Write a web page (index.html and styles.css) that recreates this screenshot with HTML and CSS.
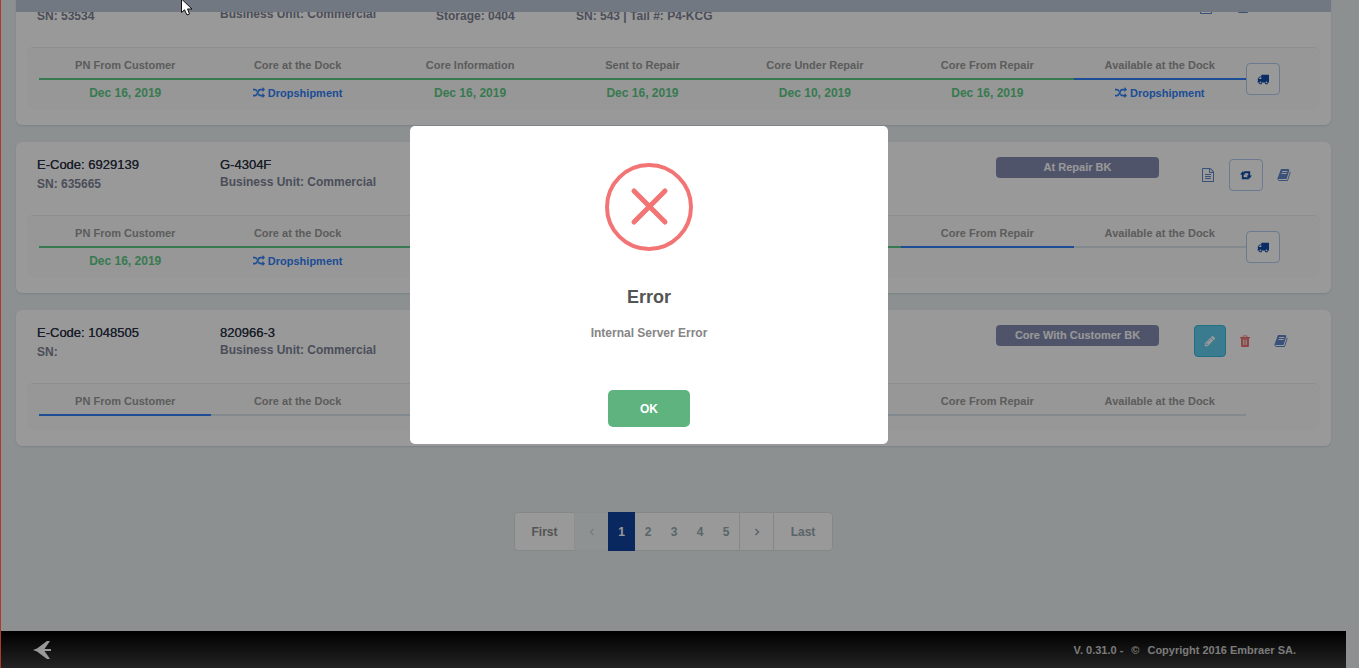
FILE: index.html
```html
<!DOCTYPE html>
<html lang="en">
<head>
<meta charset="utf-8">
<title>Core tracking</title>
<link rel="stylesheet" href="styles.css">
</head>
<body>
<svg class="sprite" aria-hidden="true">
  <symbol id="truck" viewBox="0 0 1792 1792"><path d="M640 1408q0-52-38-90t-90-38-90 38-38 90 38 90 90 38 90-38 38-90zm-384-512h384v-256h-158q-13 0-22 9l-195 195q-9 9-9 22v30zm1280 512q0-52-38-90t-90-38-90 38-38 90 38 90 90 38 90-38 38-90zm256-1088v1024q0 15-4 26.500t-13.500 18.500-16.500 11.500-23.500 6-22.500 2-25.500 0-22.500-.5q0 106-75 181t-181 75-181-75-75-181h-384q0 106-75 181t-181 75-181-75-75-181h-64q-3 0-22.500.5t-25.500 0-22.500-2-23.500-6-16.500-11.500-13.500-18.500-4-26.500q0-26 19-45t45-19v-320q0-8-.5-35t0-38 2.500-34.500 6.500-37 14-30.500 22.500-30l198-198q19-19 50.500-32t58.500-13h160v-192q0-26 19-45t45-19h1024q26 0 45 19t19 45z"/></symbol>
  <symbol id="shuffle" viewBox="0 0 1792 1792"><path d="M666 481q-60 92-137 273-22-45-37-72.500t-40.500-63.500-51-56.500-63-35-81.500-14.500h-224q-14 0-23-9t-9-23v-192q0-14 9-23t23-9h224q250 0 410 225zm1126 799q0 14-9 23l-320 320q-9 9-23 9-13 0-22.500-9.500t-9.500-22.500v-192q-32 0-85 .5t-81 1-73-1-71-5-64-10.500-63-18.500-58-28.500-59-40-55-53.500-56-69.500q59-93 136-273 22 45 37 72.500t40.500 63.500 51 56.500 63 35 81.500 14.500h256v-192q0-14 9-23t23-9q12 0 24 10l319 319q9 9 9 23zm0-896q0 14-9 23l-320 320q-9 9-23 9-13 0-22.500-9.500t-9.500-22.500v-192h-256q-48 0-87 15t-69 45-51 61.500-45 77.500q-32 62-78 171-29 66-49.500 111t-54 105-64 100-74 83-90 68.500-106.500 42-128 16.500h-224q-14 0-23-9t-9-23v-192q0-14 9-23t23-9h224q48 0 87-15t69-45 51-61.500 45-77.500q32-62 78-171 29-66 49.500-111t54-105 64-100 74-83 90-68.500 106.500-42 128-16.500h256v-192q0-14 9-23t23-9q12 0 24 10l319 319q9 9 9 23z"/></symbol>
  <symbol id="file" viewBox="0 0 1792 1792"><path d="M1596 380q28 28 48 76t20 88v1152q0 40-28 68t-68 28h-1344q-40 0-68-28t-28-68v-1600q0-40 28-68t68-28h896q40 0 88 20t76 48zm-444-244v376h376q-10-29-22-41l-313-313q-12-12-41-22zm384 1528v-1024h-416q-40 0-68-28t-28-68v-416h-768v1536h1280zm-1024-864q0-14 9-23t23-9h704q14 0 23 9t9 23v64q0 14-9 23t-23 9h-704q-14 0-23-9t-9-23v-64zm736 224q14 0 23 9t9 23v64q0 14-9 23t-23 9h-704q-14 0-23-9t-9-23v-64q0-14 9-23t23-9h704zm0 256q14 0 23 9t9 23v64q0 14-9 23t-23 9h-704q-14 0-23-9t-9-23v-64q0-14 9-23t23-9h704z"/></symbol>
  <symbol id="retweet" viewBox="0 0 13 13"><path d="M3 2.500 6 6H4v3h4.500l1.500 2H2V6H0zM10 10.500 7 7h2V4.500H5L3.700 2.500H11V7h2z"/></symbol>
  <symbol id="book" viewBox="0 0 1792 1792"><path d="M1703 478q40 57 18 129l-275 906q-19 64-76.500 107.500t-122.500 43.500h-923q-77 0-148.500-53.500t-99.500-131.500q-24-67-2-127 0-4 3-27t4-37q1-8-3-21.500t-3-19.500q2-11 8-21t16.500-23.500 16.500-23.500q23-38 45-91.500t30-91.500q3-10 .5-30t-.5-28q3-11 17-28t17-23q21-36 42-92t25-90q1-9-2.500-32t.5-28q4-13 22-30.500t22-22.500q19-26 42.500-84.500t27.500-96.500q1-8-3-25.500t-2-26.500q2-8 9-18t18-23 17-21q8-12 16.500-30.500t15-35 16-36 19.500-32 26.500-23.500 36-11.500 47.500 5.500l-1 3q38-9 51-9h761q74 0 114 56t18 130l-274 906q-36 119-71.500 153.500t-128.500 34.500h-869q-27 0-38 15-11 16-1 43 24 70 144 70h923q29 0 56-15.500t35-41.500l300-987q7-22 5-57 38 15 59 43zm-1064 2q-4 13 2 22.500t20 9.500h608q13 0 25.500-9.500t16.500-22.500l21-64q4-13-2-22.500t-20-9.500h-608q-13 0-25.500 9.500t-16.500 22.500zm-83 256q-4 13 2 22.500t20 9.500h608q13 0 25.500-9.500t16.500-22.500l21-64q4-13-2-22.500t-20-9.500h-608q-13 0-25.500 9.500t-16.500 22.500z"/></symbol>
  <symbol id="pencil" viewBox="0 0 1792 1792"><path d="M491 1536l91-91-235-235-91 91v107h128v128h107zm523-928q0-22-22-22-10 0-17 7l-542 542q-7 7-7 17 0 22 22 22 10 0 17-7l542-542q7-7 7-17zm-54-192l416 416-832 832h-416v-416zm683 96q0 53-37 90l-166 166-416-416 166-165q36-38 90-38 53 0 91 38l235 234q37 39 37 91z"/></symbol>
  <symbol id="trash" viewBox="0 0 12 12"><path d="M4 .5h4l.6 1.500H11v1.200h-1V11q0 1-1 1H3q-1 0-1-1V3.200H1V2h2.400zM4.600 1.300 4.300 2h3.400l-.3-.7zM4 4.500v5.500h.7V4.500zm1.700 0v5.500h.7V4.500zm1.700 0v5.500H8V4.500z" fill-rule="evenodd"/></symbol>
</svg>

<div class="page">
  <div class="topbar"></div>
  <main class="content">
    <article class="card">
      <div class="summary">
        <div class="cell"><p class="code"></p><p class="detail">SN: 53534</p></div>
        <div class="cell tight"><p class="code"></p><p class="detail">Business Unit: Commercial</p></div>
        <div class="cell"><p class="code"></p><p class="detail">Storage: 0404</p></div>
        <div class="cell"><p class="code"></p><p class="detail">SN: 543 | Tail #: P4-KCG</p></div>
        <div></div>
        <div class="actions start">
          <button class="icon-btn" aria-label="Document"><svg class="icon lg"><use href="#file"/></svg></button>
          <button class="icon-btn" aria-label="Log"><svg class="icon lg"><use href="#book"/></svg></button>
        </div>
      </div>
      <div class="timeline">
        <ol class="steps">
          <li class="step done"><span class="label">PN From Customer</span><span class="date">Dec 16, 2019</span></li>
          <li class="step done"><span class="label">Core at the Dock</span><span class="ship"><svg class="icon"><use href="#shuffle"/></svg>Dropshipment</span></li>
          <li class="step done"><span class="label">Core Information</span><span class="date">Dec 16, 2019</span></li>
          <li class="step done"><span class="label">Sent to Repair</span><span class="date">Dec 16, 2019</span></li>
          <li class="step done"><span class="label">Core Under Repair</span><span class="date">Dec 10, 2019</span></li>
          <li class="step done"><span class="label">Core From Repair</span><span class="date">Dec 16, 2019</span></li>
          <li class="step current"><span class="label">Available at the Dock</span><span class="ship"><svg class="icon"><use href="#shuffle"/></svg>Dropshipment</span></li>
        </ol>
        <button class="icon-btn outlined" aria-label="Shipping"><svg class="icon"><use href="#truck"/></svg></button>
      </div>
    </article>

    <article class="card">
      <div class="summary">
        <div class="cell"><p class="code">E-Code: 6929139</p><p class="detail">SN: 635665</p></div>
        <div class="cell tight"><p class="code">G-4304F</p><p class="detail">Business Unit: Commercial</p></div>
        <div></div>
        <div></div>
        <span class="badge">At Repair BK</span>
        <div class="actions">
          <button class="icon-btn" aria-label="Document"><svg class="icon lg"><use href="#file"/></svg></button>
          <button class="icon-btn outlined" aria-label="Exchange"><svg class="icon"><use href="#retweet"/></svg></button>
          <button class="icon-btn" aria-label="Log"><svg class="icon lg"><use href="#book"/></svg></button>
        </div>
      </div>
      <div class="timeline">
        <ol class="steps">
          <li class="step done"><span class="label">PN From Customer</span><span class="date">Dec 16, 2019</span></li>
          <li class="step done"><span class="label">Core at the Dock</span><span class="ship"><svg class="icon"><use href="#shuffle"/></svg>Dropshipment</span></li>
          <li class="step done"><span class="label"></span></li>
          <li class="step done"><span class="label"></span></li>
          <li class="step done"><span class="label"></span></li>
          <li class="step current"><span class="label">Core From Repair</span></li>
          <li class="step"><span class="label">Available at the Dock</span></li>
        </ol>
        <button class="icon-btn outlined" aria-label="Shipping"><svg class="icon"><use href="#truck"/></svg></button>
      </div>
    </article>

    <article class="card">
      <div class="summary">
        <div class="cell"><p class="code">E-Code: 1048505</p><p class="detail">SN:</p></div>
        <div class="cell tight"><p class="code">820966-3</p><p class="detail">Business Unit: Commercial</p></div>
        <div></div>
        <div></div>
        <span class="badge">Core With Customer BK</span>
        <div class="actions flush">
          <button class="icon-btn edit" aria-label="Edit"><svg class="icon"><use href="#pencil"/></svg></button>
          <button class="icon-btn remove" aria-label="Delete"><svg class="icon"><use href="#trash"/></svg></button>
          <button class="icon-btn" aria-label="Log"><svg class="icon lg"><use href="#book"/></svg></button>
        </div>
      </div>
      <div class="timeline short">
        <ol class="steps">
          <li class="step current"><span class="label">PN From Customer</span></li>
          <li class="step"><span class="label">Core at the Dock</span></li>
          <li class="step"><span class="label"></span></li>
          <li class="step"><span class="label"></span></li>
          <li class="step"><span class="label"></span></li>
          <li class="step"><span class="label">Core From Repair</span></li>
          <li class="step"><span class="label">Available at the Dock</span></li>
        </ol>
        <div class="slot"></div>
      </div>
    </article>

    <nav class="pager" aria-label="Pages">
      <a class="end first" href="#">First</a>
      <a class="arrow off" href="#" aria-label="Previous"><svg class="chevron" viewBox="0 0 6 8"><path d="M4.500 1 1.500 4l3 3"/></svg></a>
      <a class="num active" href="#" aria-current="page">1</a>
      <a class="num" href="#">2</a>
      <a class="num" href="#">3</a>
      <a class="num" href="#">4</a>
      <a class="num" href="#">5</a>
      <a class="arrow" href="#" aria-label="Next"><svg class="chevron" viewBox="0 0 6 8"><path d="M1.500 1l3 3-3 3"/></svg></a>
      <a class="end last" href="#">Last</a>
    </nav>
  </main>
  <footer class="footer">
    <svg class="logo" viewBox="0 0 18 18" role="img" aria-label="Embraer"><path d="M0 9 4 7.500 14 0h3L11.500 8H18v2h-6.500L17 18h-3L4 10.500z"/></svg>
    <p class="copyright"><span>V. 0.31.0 -</span><span>©</span><span>Copyright 2016 Embraer SA.</span></p>
  </footer>
</div>

<div class="overlay">
  <section class="modal" role="dialog" aria-modal="true" aria-labelledby="dlg-title">
    <svg class="error-mark" viewBox="0 0 88 88" aria-hidden="true"><circle cx="44" cy="44" r="42"/><path d="M29 28 60 59M60 28 29 59"/></svg>
    <h2 class="modal-title" id="dlg-title">Error</h2>
    <p class="modal-text">Internal Server Error</p>
    <button class="ok">OK</button>
  </section>
</div>
<div class="edge"></div>
<svg class="cursor" viewBox="0 0 12 16" aria-hidden="true"><path d="M.5-1V12.500L3.500 9.800 6 15l2.500-1L6.500 9H11z"/></svg>
</body>
</html>
```
FILE: styles.css
```css
* { box-sizing: border-box; }

body {
  margin: 0;
  font-family: "Liberation Sans", Arial, sans-serif;
  font-size: 12px;
  line-height: 16px;
  background: #e9f1f1;
}

p, h2, ol { margin: 0; padding: 0; }
button { font: inherit; cursor: pointer; }
.sprite { display: none; }

.page {
  display: flex;
  flex-direction: column;
  min-height: 100vh;
  overflow: hidden;
}

.topbar {
  position: absolute;
  top: 0;
  left: 16px;
  right: 28px;
  height: 12px;
  background: #bec9d9;
}

.content {
  flex: 1;
  display: flex;
  flex-direction: column;
  gap: 17px;
  margin: -26px 28px 0 16px;
}

.card {
  padding-bottom: 16px;
  background: #fff;
  border-radius: 6px;
  box-shadow: 0 1px 2px #ccd7e0;
}

.summary {
  display: grid;
  grid-template-columns: 183fr 216fr 140fr 420fr 163fr 172fr;
  align-items: start;
  height: 73px;
  padding: 15px 0 0 21px;
}

.cell {
  display: grid;
  gap: 3px;
}
.cell.tight { gap: 1px; }
.code {
  min-height: 16px;
  color: #2c3548;
  font-size: 13px;
  text-shadow: 0 0 0 currentColor;
}
.detail { color: #7d8396; font-weight: bold; white-space: nowrap; }

.badge {
  height: 21px;
  line-height: 21px;
  border-radius: 4px;
  background: #858db2;
  color: #fff;
  font-size: 11px;
  font-weight: bold;
  text-align: center;
  white-space: nowrap;
}

.actions {
  display: flex;
  justify-content: center;
  align-items: center;
  gap: 4px;
  padding: 2px 0 0 2px;
}
.actions.start { justify-content: flex-start; padding-left: 30px; }
.actions.flush { padding-top: 0; }

.icon-btn {
  display: flex;
  align-items: center;
  justify-content: center;
  width: 34px;
  height: 32px;
  padding: 0;
  border: 1px solid transparent;
  border-radius: 4px;
  background: none;
  color: #5f87c9;
}
.outlined { background: #fff; border-color: #b2ccf2; color: #114ba8; }
.edit { width: 32px; background: #61cdf0; border-color: #36bbe0; color: #fff; }
.remove { width: 30px; color: #eb7474; }

.icon { width: 12px; height: 12px; fill: currentColor; flex: none; }
.icon.lg { width: 14px; height: 14px; }

.timeline {
  display: flex;
  align-items: flex-start;
  height: 62px;
  margin: 0 11px;
  padding: 0 40px 0 12px;
  border-top: 1px solid #eceeef;
  border-radius: 6px;
  background: #fcfcfc;
}
.timeline.short { height: 47px; }
.timeline .icon-btn { margin-top: 15px; }
.slot { width: 34px; }

.steps {
  flex: 1;
  display: flex;
  list-style: none;
}
.step {
  flex: 1;
  display: flex;
  flex-direction: column;
  align-items: center;
  white-space: nowrap;
}
.label {
  width: 100%;
  height: 32px;
  padding-top: 9px;
  border-bottom: 2px solid #dbe6ef;
  color: #999;
  font-size: 11px;
  font-weight: bold;
  text-align: center;
}
.done .label { border-color: #5ccc86; }
.current .label { border-color: #3080f8; }
.date { margin-top: 5px; color: #5ccc86; font-weight: bold; }
.ship {
  display: flex;
  align-items: center;
  gap: 3px;
  margin-top: 5px;
  color: #3080f8;
  font-size: 11px;
  font-weight: bold;
}

.pager {
  display: flex;
  align-self: center;
  align-items: center;
  height: 39px;
  margin-top: 49px;
  font-weight: bold;
}
.pager a {
  display: flex;
  align-items: center;
  justify-content: center;
  height: 39px;
  border: 1px solid #dce3e5;
  border-width: 1px 0;
  background: #fff;
  color: #95a8b0;
  text-decoration: none;
}
.pager .end { width: 60px; border-width: 1px; }
.pager .first { border-right: 0; border-radius: 4px 0 0 4px; color: #8c8c8c; }
.pager .last { border-radius: 0 4px 4px 0; }
.pager .num { width: 26px; }
.pager .active { width: 27px; background: #0f449f; border-color: #0f449f; color: #fff; }
.pager .arrow { width: 34px; border-left-width: 1px; }
.pager .off { border-color: #e6edef; background: #eff4f4; color: #c8d2d5; }
.chevron { width: 6px; height: 8px; fill: none; stroke: currentColor; stroke-width: 1.500; }

.footer {
  display: flex;
  align-items: center;
  justify-content: space-between;
  height: 37px;
  margin-right: 13px;
  padding: 1px 50px 0 33px;
  background: linear-gradient(#000, #3c3c3c);
  color: #ccc;
  font-size: 11px;
  font-weight: bold;
}
.logo { width: 18px; height: 18px; fill: #fff; }
.copyright { display: flex; gap: 8px; }

.overlay {
  position: fixed;
  inset: 0;
  display: flex;
  align-items: flex-start;
  justify-content: center;
  padding: 126px 61px 0 0;
  background: rgba(0, 0, 0, 0.4);
}
.modal {
  display: flex;
  flex-direction: column;
  align-items: center;
  width: 478px;
  padding: 37px 20px 17px;
  border-radius: 5px;
  background: #fff;
}
.error-mark {
  width: 88px;
  height: 88px;
  fill: none;
  stroke: #f27474;
  stroke-width: 4;
}
.error-mark path { stroke-width: 5; stroke-linecap: round; }
.modal-title {
  margin-top: 34px;
  color: #545454;
  font-size: 18px;
  line-height: 24px;
}
.modal-text {
  margin-top: 16px;
  color: #858585;
  font-weight: bold;
}
.ok {
  width: 82px;
  height: 37px;
  margin-top: 49px;
  border: 0;
  border-radius: 5px;
  background: #5eb37f;
  color: #fff;
  font-weight: bold;
}

.edge {
  position: fixed;
  inset: 0 auto 0 0;
  width: 1px;
  background: #b03a24;
}
.cursor {
  position: fixed;
  top: 0;
  left: 181px;
  width: 12px;
  height: 16px;
  fill: #fff;
  stroke: #111;
}
```
